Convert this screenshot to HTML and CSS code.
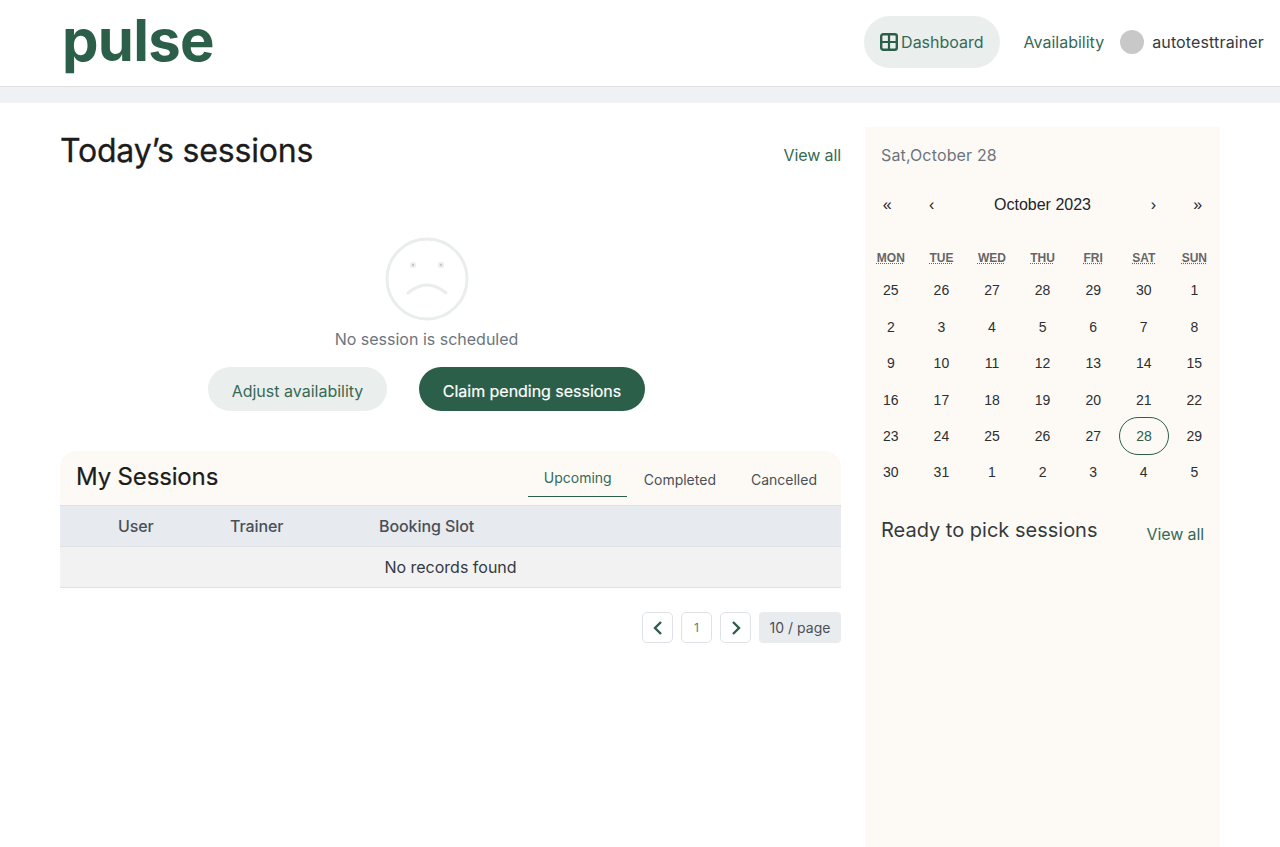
FILE: index.html
```html
<!DOCTYPE html>
<html lang="en">
<head>
<meta charset="utf-8">
<title>Pulse</title>
<link rel="stylesheet" href="styles.css">
</head>
<body>
<header class="topbar">
  <div class="logo">pulse</div>
  <nav class="nav">
    <a class="nav-item active">
      <svg class="nav-icon" viewBox="0 0 18 18" width="18" height="18" aria-hidden="true"><rect x="1.2" y="1.2" width="15.6" height="15.6" rx="2" fill="none" stroke="#2b5f4a" stroke-width="2.4"/><path d="M9 1v16M1 9h16" stroke="#2b5f4a" stroke-width="2.2"/></svg>
      Dashboard</a>
    <a class="nav-item">Availability</a>
    <div class="user"><span class="avatar"></span><span class="username">autotesttrainer</span></div>
  </nav>
</header>
<div class="band"></div>
<main class="page">
  <section class="left">
    <div class="today-head">
      <h1>Today’s sessions</h1>
      <a class="link">View all</a>
    </div>
    <div class="empty">
      <svg class="sad" viewBox="0 0 84 84" width="84" height="84" aria-hidden="true">
        <circle cx="42" cy="42" r="40" fill="none" stroke="#e9edec" stroke-width="3"/>
        <circle cx="28" cy="28" r="3" fill="#e9edec"/><circle cx="28" cy="28" r="1" fill="#b5bcbc"/>
        <circle cx="56" cy="28" r="3" fill="#e9edec"/><circle cx="56" cy="28" r="1" fill="#b5bcbc"/>
        <path d="M23 56q19-16 38 0" fill="none" stroke="#e9edec" stroke-width="3" stroke-linecap="round"/>
      </svg>
      <p class="empty-text">No session is scheduled</p>
      <div class="actions">
        <button class="btn btn-light">Adjust availability</button>
        <button class="btn btn-dark">Claim pending sessions</button>
      </div>
    </div>
    <div class="sessions">
      <div class="sessions-head">
        <h2>My Sessions</h2>
        <div class="tabs">
          <span class="tab tab-active">Upcoming</span>
          <span class="tab tab-completed">Completed</span>
          <span class="tab tab-cancelled">Cancelled</span>
        </div>
      </div>
      <div class="thead">
        <span class="th-user">User</span>
        <span class="th-trainer">Trainer</span>
        <span>Booking Slot</span>
      </div>
      <div class="tbody">No records found</div>
    </div>
    <div class="pager">
      <span class="page-btn"><svg viewBox="0 0 12 16" width="12" height="16" aria-hidden="true"><path d="M9 2 3 8l6 6" fill="none" stroke="#2b5f4a" stroke-width="2.4"/></svg></span>
      <span class="page-btn page-num">1</span>
      <span class="page-btn"><svg viewBox="0 0 12 16" width="12" height="16" aria-hidden="true"><path d="m3 2 6 6-6 6" fill="none" stroke="#2b5f4a" stroke-width="2.4"/></svg></span>
      <span class="page-size">10 / page</span>
    </div>
  </section>
  <aside class="side">
    <div class="side-date">Sat,October 28</div>
    <div class="cal-nav">
      <span>«</span><span>‹</span><span class="cal-title">October 2023</span><span>›</span><span>»</span>
    </div>
    <div class="cal-week">
      <abbr>MON</abbr><abbr>TUE</abbr><abbr>WED</abbr><abbr>THU</abbr><abbr>FRI</abbr><abbr>SAT</abbr><abbr>SUN</abbr>
    </div>
    <div class="cal-grid">
      <span>25</span><span>26</span><span>27</span><span>28</span><span>29</span><span>30</span><span>1</span>
      <span>2</span><span>3</span><span>4</span><span>5</span><span>6</span><span>7</span><span>8</span>
      <span>9</span><span>10</span><span>11</span><span>12</span><span>13</span><span>14</span><span>15</span>
      <span>16</span><span>17</span><span>18</span><span>19</span><span>20</span><span>21</span><span>22</span>
      <span>23</span><span>24</span><span>25</span><span>26</span><span>27</span><span class="today">28</span><span>29</span>
      <span>30</span><span>31</span><span>1</span><span>2</span><span>3</span><span>4</span><span>5</span>
    </div>
    <div class="ready">
      <h3>Ready to pick sessions</h3>
      <a class="link">View all</a>
    </div>
  </aside>
</main>
</body>
</html>
```
FILE: styles.css
```css
* { box-sizing: border-box; }
html, body { margin: 0; padding: 0; height: 847px; overflow: hidden; }
body { font-family: Inter, "Liberation Sans", sans-serif; background: #fff; color: #212529; font-size: 16px; }
h1, h2, h3, p { margin: 0; font-weight: 400; }

.topbar { height: 87px; border-bottom: 1px solid #dee2e6; display: flex; align-items: center; justify-content: space-between; padding: 0 16px 2px 62px; }
.logo { font-family: Inter, sans-serif; font-weight: 700; font-size: 58px; line-height: 86px; letter-spacing: -0.7px; color: #2b5f4a; height: 86px; margin-top: -5px; }
.nav { display: flex; align-items: center; font-size: 16px; color: #366a55; }
.nav-item { display: flex; align-items: center; gap: 3px; height: 52px; padding: 0 16px; border-radius: 26px; margin-right: 8px; }
.nav-item.active { background: #eaeeed; }
.nav-item:nth-child(2) { margin-right: 0; }
.user { display: flex; align-items: center; gap: 8px; color: #343a40; }
.username { letter-spacing: 0.14px; }
.avatar { width: 24px; height: 24px; border-radius: 50%; background: #c8c8c8; }

.band { height: 16px; background: #f0f1f5; }

.page { display: flex; gap: 24px; padding: 24px 60px 0; height: 744px; }
.left { width: 781px; }
.today-head { display: flex; justify-content: space-between; align-items: flex-start; height: 110px; }
h1 { font-size: 32px; line-height: 48px; letter-spacing: -0.2px; color: #1c1c1c; -webkit-text-stroke: 0.3px #1c1c1c; }
.today-head .link { margin-top: 16px; }
.link { color: #366a55; font-size: 16px; line-height: 24px; letter-spacing: -0.1px; }

.empty { display: flex; flex-direction: column; align-items: center; padding-right: 48px; }
.sad { display: block; }
.empty-text { font-size: 16px; line-height: 24px; color: #6c757d; margin-top: 6px; }
.actions { display: flex; gap: 32px; margin-top: 16px; }
.btn { height: 44px; border: 0; border-radius: 22px; padding: 4px 0 0; font: 16px Inter, sans-serif; }
.btn-light { width: 179px; background: #eaeeed; color: #366a55; }
.btn-dark { width: 226px; background: #2b5f4a; color: #fff; letter-spacing: -0.03px; -webkit-text-stroke: 0.2px #fff; }

.sessions { margin-top: 40px; }
.sessions-head { height: 55px; background: #fdfaf6; border-radius: 16px 16px 0 0; display: flex; justify-content: space-between; padding: 0 8px 0 16px; border-bottom: 1px solid #dee2e6; }
h2 { font-size: 24px; line-height: 52px; letter-spacing: -0.15px; color: #1c1c1c; -webkit-text-stroke: 0.2px #1c1c1c; }
.tabs { display: flex; font-size: 14px; color: #495057; height: 46px; }
.tab { line-height: 54px; padding: 0 16px; }
.tab-active { width: 99px; color: #366a55; border-bottom: 1px solid #2b5f4a; }
.tab-completed { padding: 2px 17px 0; }
.tab-cancelled { padding: 2px 16px 0 18px; }
.thead { height: 41px; background: #e7eaee; border-bottom: 1px solid #dee2e6; display: flex; align-items: center; padding-left: 58px; font-weight: 500; color: #495057; letter-spacing: -0.08px; }
.th-user { width: 112px; }
.th-trainer { width: 149px; }
.tbody { height: 41px; background: #f2f2f3; border-bottom: 1px solid #dee2e6; text-align: center; line-height: 40px; color: #343a40; }

.pager { display: flex; justify-content: flex-end; align-items: center; gap: 8px; margin-top: 24px; }
.page-btn { width: 31px; height: 31px; border: 1px solid #dee2e6; border-radius: 5px; display: flex; align-items: center; justify-content: center; background: #fff; }
.page-num { font-size: 12px; color: #6c757d; }
.page-size { height: 31px; width: 82px; background: #e9ecef; border-radius: 4px; font-size: 14px; line-height: 32px; text-align: center; color: #495057; }

.side { width: 355px; background: #fdfaf6; padding-top: 16px; }
.side-date { padding-left: 16px; color: #6c757d; line-height: 24px; letter-spacing: 0.15px; }
.cal-nav { display: flex; align-items: center; margin-top: 26px; height: 24px; color: #212529; font-family: "Liberation Sans", sans-serif; }
.cal-nav span { width: 44.4px; text-align: center; }
.cal-nav .cal-title { flex: 1; font-size: 16px; }
.cal-week { display: grid; grid-template-columns: repeat(7, 50.6px); margin: 31px 0 0 0.5px; height: 20px; font-family: "Liberation Sans", sans-serif; }
.cal-week abbr { text-align: center; font-size: 12px; font-weight: 700; line-height: 20px; color: #666; text-decoration: underline dotted; }
.cal-grid { display: grid; grid-template-columns: repeat(7, 50.6px); grid-auto-rows: 36.4px; margin: 4.2px 0 0 0.5px; font-family: "Liberation Sans", sans-serif; font-size: 14px; color: #2b2f33; }
.cal-grid span { display: flex; align-items: center; justify-content: center; }
.cal-grid .today { color: #2b5f4a; border: 1px solid #2b5f4a; border-radius: 19px; height: 38px; margin: -1px 0 -1px 0.6px; }
.ready { display: flex; justify-content: space-between; padding: 0 16px; margin-top: 23.9px; }
h3 { font-size: 20px; line-height: 32px; color: #343a40; }
.ready .link { margin-top: 8px; }
```
